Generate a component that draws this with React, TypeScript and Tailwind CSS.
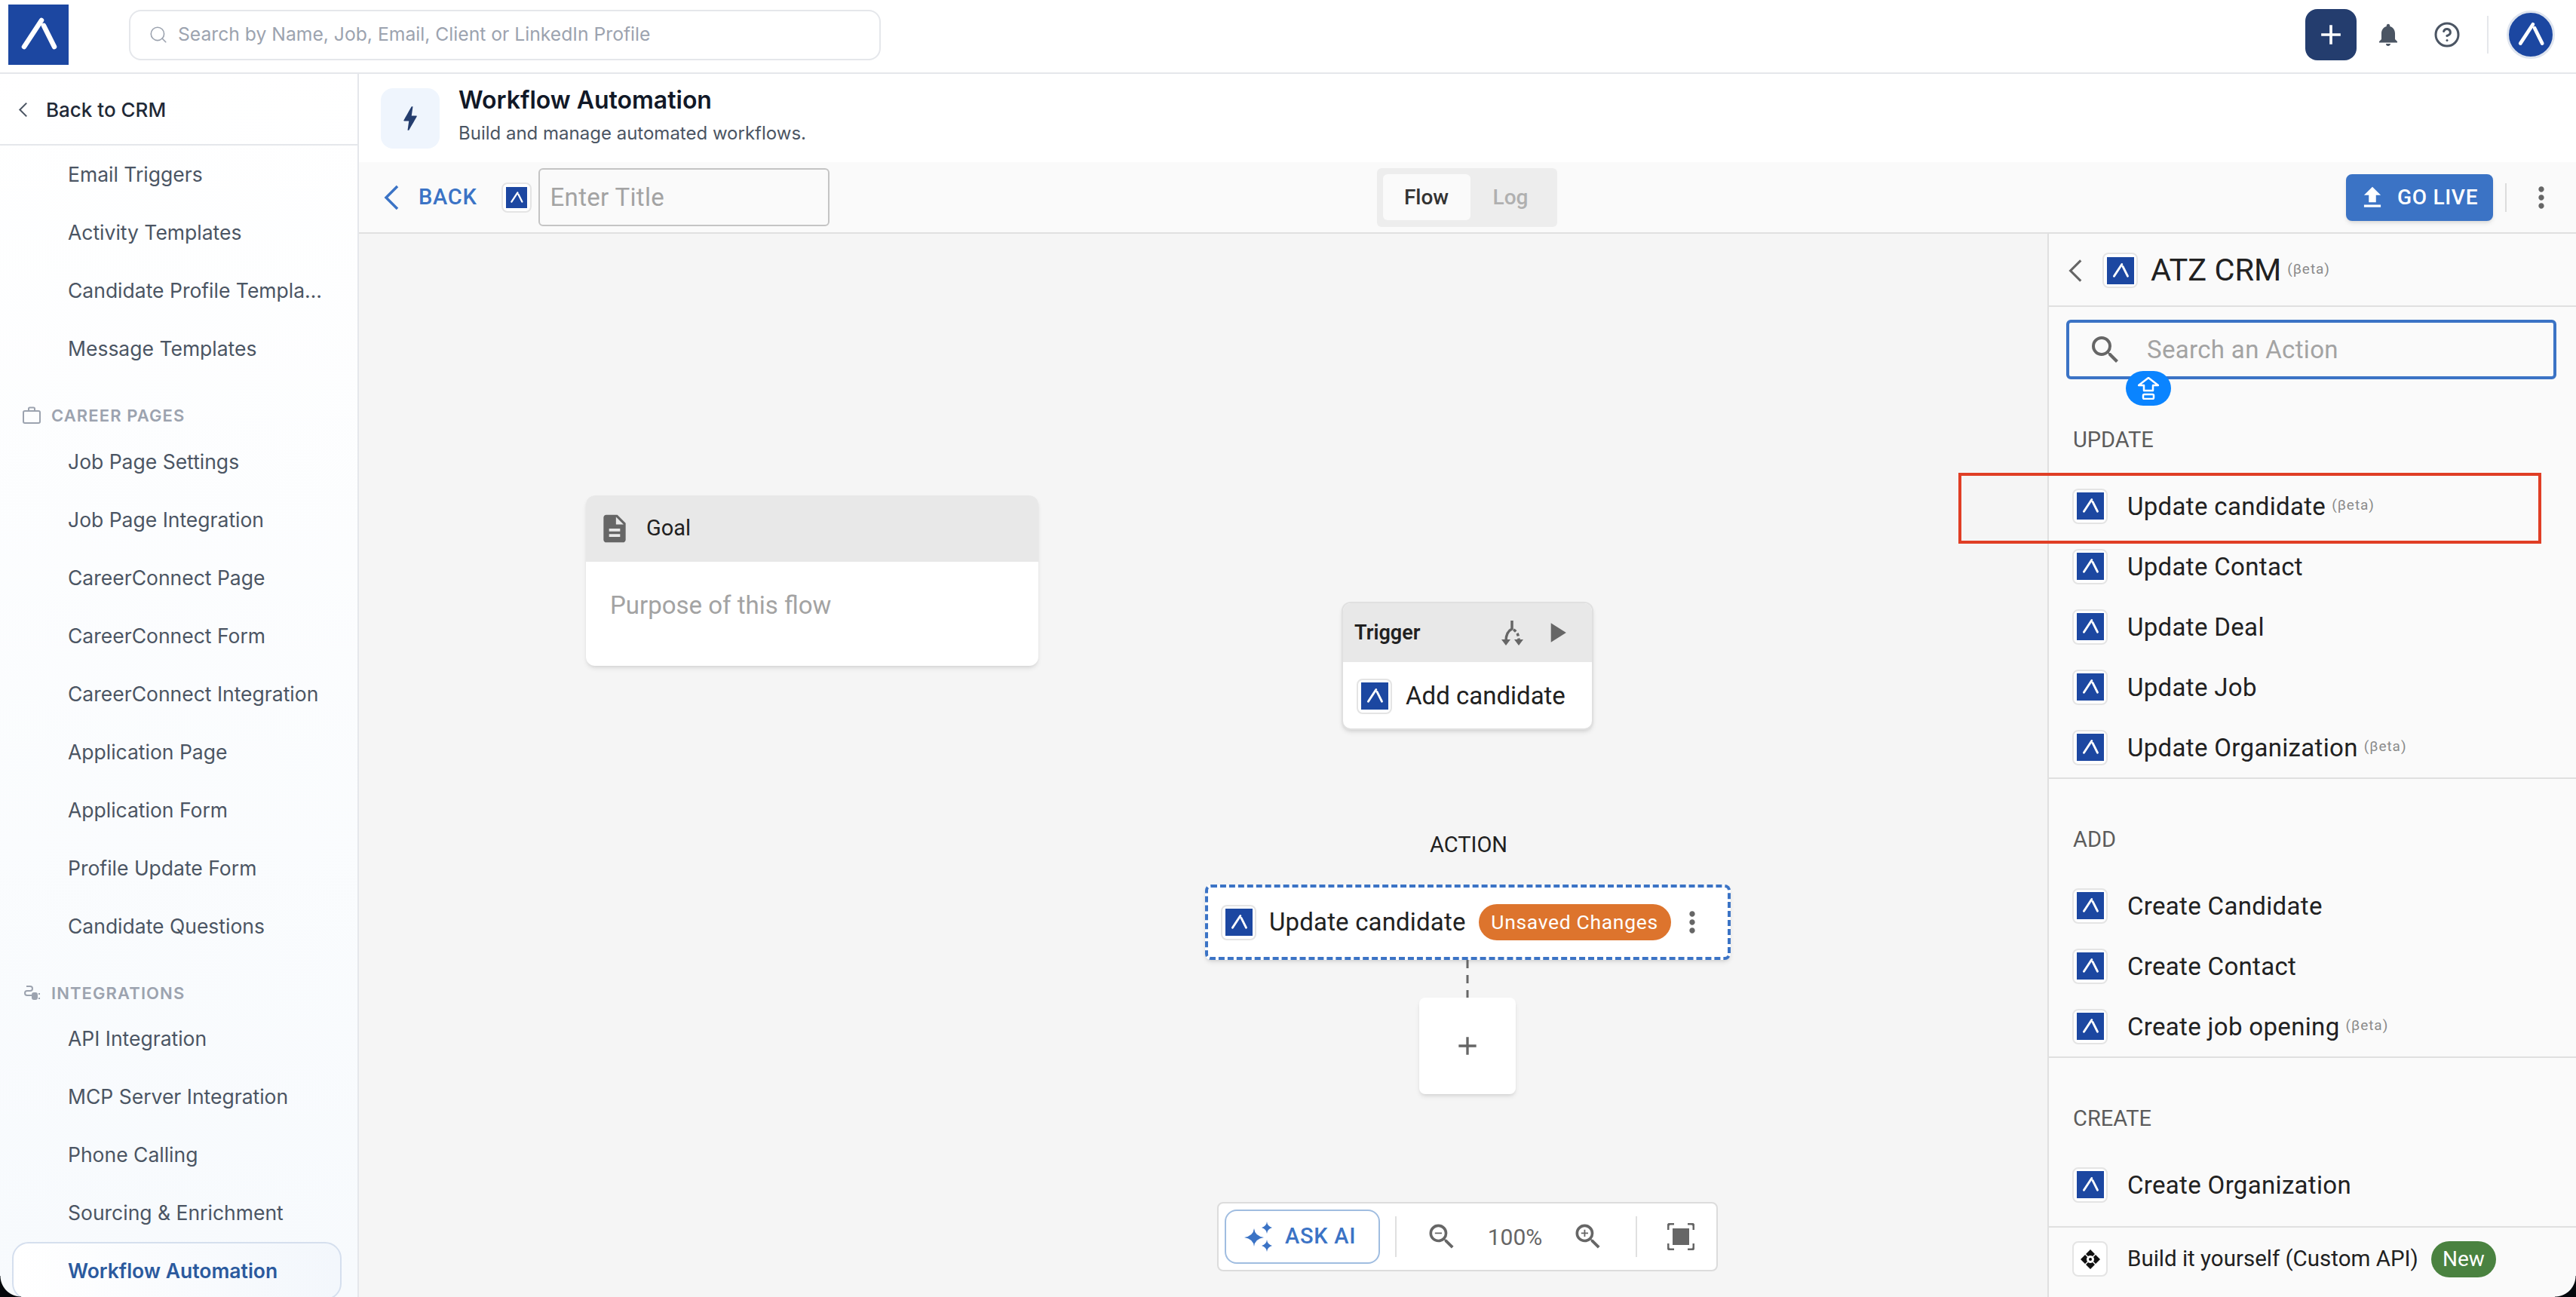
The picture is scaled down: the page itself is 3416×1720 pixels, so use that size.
import { ReactNode } from "react";
import { CircleHelp, Search } from "lucide-react";
import {
  MdAdd,
  MdBolt,
  MdDescription,
  MdFileUpload,
  MdMoreVert,
  MdNotifications,
  MdPlayArrow,
  MdSearch,
  MdZoomIn,
  MdZoomOut,
} from "react-icons/md";

const Strokes = () => (
  <path d="M44 21 L21 56 M47 28 L61 56" fill="none" stroke="#fff" strokeWidth="6.5" strokeLinecap="round" />
);

const Glyph = ({ className }: { className: string }) => (
  <svg viewBox="0 0 80 80" className={className}>
    <rect width="80" height="80" fill="#1c47a1" />
    <Strokes />
  </svg>
);

const Tile = ({ children }: { children?: ReactNode }) => (
  <div className="w-[47px] h-[47px] shrink-0 flex items-center justify-center rounded-lg border-2 border-[#e4e4e4] bg-white">
    {children ?? <Glyph className="w-9 h-9" />}
  </div>
);

const Chevron = ({ color, className }: { color: string; className: string }) => (
  <svg viewBox="0 0 22 34" className={className}>
    <polyline points="19,2 4,17 19,32" fill="none" stroke={color} strokeWidth="3.5" />
  </svg>
);

const Beta = () => (
  <span className="ml-2 mb-1 text-[19px] leading-none tracking-wider text-[#8a8a8a]">(βeta)</span>
);

const SideItem = ({ label }: { label: string }) => (
  <div className="h-[77px] shrink-0 flex items-center pl-[90px] text-[26.5px] text-[#4b5563]">
    <span className="truncate w-[338px]">{label}</span>
  </div>
);

const SideHeading = ({ icon, label, className }: { icon: ReactNode; label: string; className: string }) => (
  <div className={`shrink-0 pt-[37px] pl-[30px] flex items-start gap-[14px] text-[22px] leading-[26px] font-semibold tracking-[0.05em] text-[#9ca3af] ${className}`}>
    <div className="w-6 h-[26px] flex items-center">{icon}</div>
    {label}
  </div>
);

const PanelRow = ({ label, beta }: { label: string; beta?: boolean }) => (
  <div className="h-[80px] flex items-center pl-[31px] gap-[26px]">
    <Tile />
    <div className="flex items-center pt-[1px] text-[33px] tracking-[0.01em] text-[#212121]">
      {label}
      {beta && <Beta />}
    </div>
  </div>
);

const PanelLabel = ({ label }: { label: string }) => (
  <div className="h-[128px] pt-[65px] pl-8 text-[29px] leading-[30px] text-[#5c5c5c]">{label}</div>
);

const Spark = ({ d }: { d: string }) => <path d={d} fill="#3b73c5" />;

const careerPages = [
  "Job Page Settings",
  "Job Page Integration",
  "CareerConnect Page",
  "CareerConnect Form",
  "CareerConnect Integration",
  "Application Page",
  "Application Form",
  "Profile Update Form",
  "Candidate Questions",
];

const integrations = ["API Integration", "MCP Server Integration", "Phone Calling", "Sourcing & Enrichment"];

export default function App() {
  return (
    <div className="relative w-[3416px] h-[1720px] overflow-hidden bg-white font-['Inter',sans-serif]">
      {/* ----- Top bar ----- */}
      <header className="h-[98px] flex items-center border-b-2 border-[#e5e7eb] pb-1">
        <Glyph className="ml-[11px] w-20 h-20" />
        <div className="ml-20 w-[997px] h-[67px] flex items-center rounded-2xl border-2 border-[#e5e7eb] pl-6 gap-[13px] text-[24.7px] text-[#9ca3af]">
          <Search size={26} strokeWidth={1.5} />
          Search by Name, Job, Email, Client or LinkedIn Profile
        </div>
        <div className="ml-auto flex items-center pr-[28px]">
          <div className="w-[68px] h-[68px] rounded-2xl bg-[#243d6e] flex items-center justify-center text-white">
            <MdAdd size={44} />
          </div>
          <MdNotifications size={36} className="ml-6 text-[#4b5563]" />
          <CircleHelp size={36} strokeWidth={2} className="ml-[42px] text-[#4b5563]" />
          <div className="ml-[35px] w-[2px] h-[50px] bg-[#e5e7eb]" />
          <div className="ml-6 w-[64px] h-[64px] rounded-full border-[3px] border-[#dfe5ef] bg-[#1c47a1] flex items-center justify-center">
            <svg viewBox="0 0 80 80" className="w-[58px] h-[58px]">
              <Strokes />
            </svg>
          </div>
        </div>
      </header>

      <div className="flex h-[1622px]">
        {/* ----- Sidebar ----- */}
        <aside className="w-[476px] shrink-0 border-r-2 border-[#e5e7eb] overflow-hidden bg-gradient-to-b from-white to-[#f7fafd]">
          <div className="h-[95px] flex items-center border-b-2 border-[#e5e7eb] pl-6 pt-[1px] gap-[24px] text-[26px] font-medium text-[#1f2937]">
            <Chevron color="#4b5563" className="w-[13px] h-[27px]" />
            Back to CRM
          </div>
          <SideItem label="Email Triggers" />
          <SideItem label="Activity Templates" />
          <SideItem label="Candidate Profile Templates" />
          <SideItem label="Message Templates" />
          <SideHeading
            className="h-[73px]"
            label="CAREER PAGES"
            icon={
              <svg viewBox="0 0 24 24" className="w-6 h-6" fill="none" stroke="#9ca3af" strokeWidth="2">
                <rect x="1" y="6" width="22" height="16" rx="2" />
                <path d="M8 6V3q0-1.500 1.500-1.500h5Q16 1.500 16 3v3" />
              </svg>
            }
          />
          {careerPages.map((label) => (
            <SideItem key={label} label={label} />
          ))}
          <SideHeading
            className="h-[72px]"
            label="INTEGRATIONS"
            icon={
              <svg viewBox="0 0 24 24" className="w-6 h-6" fill="none" stroke="#9ca3af" strokeWidth="2">
                <path d="M5 3h5q3 0 3 3t-3 3H6q-3 0-3 3t3 3h6" />
                <rect x="13" y="12" width="6" height="8" rx="2" fill="#9ca3af" />
                <path d="M21 13h2M21 19h2" />
              </svg>
            }
          />
          {integrations.map((label) => (
            <SideItem key={label} label={label} />
          ))}
          <div className="h-[77px] ml-[16px] w-[437px] pl-[72px] flex items-center rounded-[22px] border-2 border-[#d5dfee] bg-gradient-to-r from-white to-[#f3f7fc] text-[26.5px] font-semibold text-[#2b5a9e]">
            Workflow Automation
          </div>
        </aside>

        <main className="flex-1 flex flex-col min-w-0">
          {/* ----- Page title ----- */}
          <div className="h-[117px] shrink-0 flex items-start pt-[19px] pl-[29px] gap-[25px]">
            <div className="w-[78px] h-20 rounded-2xl bg-[#eff5fd] flex items-center justify-center text-[#243d6e]">
              <MdBolt size={42} />
            </div>
            <div className="-mt-[2px]">
              <div className="text-[32px] leading-[36px] font-semibold text-[#111827]">Workflow Automation</div>
              <div className="mt-[10px] text-[24px] leading-[32px] text-[#4b5563]">Build and manage automated workflows.</div>
            </div>
          </div>

          {/* ----- Flow toolbar ----- */}
          <div className="h-[95px] shrink-0 flex items-center bg-[#fafafa] border-b-2 border-[#e0e0e0] font-['Roboto',sans-serif]">
            <Chevron color="#3b73c5" className="ml-[32px] w-[22px] h-[34px]" />
            <span className="ml-[25px] pt-[1px] text-[29px] font-medium tracking-wide text-[#3b73c5]">BACK</span>
            <div className="ml-[32px] w-[40px] h-[40px] rounded-lg border-2 border-[#e4e4e4] bg-white flex items-center justify-center">
              <Glyph className="w-7 h-7" />
            </div>
            <div className="ml-[9px] w-[386px] h-[77px] flex items-center pl-[14px] pt-[1px] rounded-md border-2 border-[#c4c4c4] text-[33px] tracking-[0.01em] text-[#a3a3a3]">
              Enter Title
            </div>
            <div className="ml-[726px] w-[239px] h-[78px] flex items-center p-2 rounded-md bg-[#ededed] text-[28px] font-medium">
              <div className="w-[116px] h-[61px] flex items-center justify-center rounded-md bg-[#fafafa] text-[#333]">Flow</div>
              <div className="flex-1 text-center text-[#b0b0b0]">Log</div>
            </div>
            <div className="ml-auto flex items-center pr-[24px]">
              <div className="w-[195px] h-[62px] flex items-center pl-[16px] gap-[14px] rounded-lg bg-[#3b73c5] text-white text-[28px] font-medium tracking-wide shadow-md">
                <MdFileUpload size={38} />
                GO LIVE
              </div>
              <div className="ml-4 w-[2px] h-[38px] bg-[#dcdcdc]" />
              <MdMoreVert size={44} className="ml-[24px] text-[#666]" />
            </div>
          </div>

          <div className="flex-1 flex min-h-0 font-['Roboto',sans-serif]">
            {/* ----- Canvas ----- */}
            <div className="relative flex-1 bg-[#f5f5f5] text-[#212121]">
              <div className="absolute left-[301px] top-[347px] w-[600px] h-[226px] rounded-xl bg-white shadow-md overflow-hidden">
                <div className="h-[88px] bg-[#e8e8e8] flex items-center pl-[16px] gap-[20px] text-[29px]">
                  <MdDescription size={44} className="text-[#666]" />
                  Goal
                </div>
                <div className="pt-[42px] pl-[32px] text-[33px] leading-[32px] text-[#a3a3a3]">Purpose of this flow</div>
              </div>

              <div className="absolute left-[1303px] top-[488px] w-[334px] h-[170px] rounded-xl border-2 border-[#e0e0e0] bg-white shadow-md overflow-hidden">
                <div className="h-[78px] bg-[#e8e8e8] flex items-center pl-[15px] text-[27px] font-semibold">
                  Trigger
                  <svg viewBox="0 0 29 33" className="ml-[108px] w-[29px] h-[33px]" fill="none" stroke="#666" strokeWidth="3.5">
                    <path d="M14 0v11q-8 4-8 16" />
                    <path d="M16 12q7 4 7 14" strokeDasharray="4 3" />
                    <path d="M0 25h12l-6 8zM17 25h12l-6 8z" fill="#666" stroke="none" />
                  </svg>
                  <MdPlayArrow size={44} className="ml-[22px] text-[#666]" />
                </div>
                <div className="h-[90px] flex items-center pl-[18px] gap-[18px] text-[33px]">
                  <Tile />
                  Add candidate
                </div>
              </div>

              <div className="absolute left-[1420px] w-[100px] top-[793px] text-center text-[29px] leading-[34px]">ACTION</div>

              <div className="absolute left-[1122px] top-[863px] w-[697px] h-[100px] flex items-center pl-[17px] rounded-lg border-[4px] border-dashed border-[#3b73c5] bg-white shadow-md">
                <Tile />
                <span className="ml-[17px] text-[33px] tracking-[0.005em]">Update candidate</span>
                <span className="ml-[17px] w-[255px] h-[48px] flex items-center justify-center rounded-full bg-[#dd742d] text-white text-[26.5px] tracking-wide">
                  Unsaved Changes
                </span>
                <MdMoreVert size={44} className="ml-[6px] text-[#666]" />
              </div>

              <svg viewBox="0 0 4 50" className="absolute left-[1468px] top-[963px] w-1 h-[50px]">
                <line x1="2" y1="0" x2="2" y2="50" stroke="#666" strokeWidth="3" strokeDasharray="11 9" />
              </svg>

              <div className="absolute left-[1406px] top-[1013px] w-[128px] h-[128px] flex items-center justify-center rounded-lg bg-white shadow-md text-[#666]">
                <MdAdd size={40} />
              </div>

              <div className="absolute left-[1138px] top-[1284px] w-[664px] h-[92px] flex items-center rounded-lg border-2 border-[#dcdcdc] bg-white pl-[8px] text-[#666]">
                <div className="w-[206px] h-[72px] flex items-center pl-[24px] gap-[16px] rounded-2xl border-2 border-[#a0bde0] text-[29px] font-medium tracking-wide text-[#3b73c5]">
                  <svg viewBox="0 0 38 40" className="w-[38px] h-[40px]">
                    <Spark d="M13 9 Q14 19 26 21 Q14 23 13 33 Q12 23 0 21 Q12 19 13 9Z" />
                    <Spark d="M30 0 Q30.500 6 37 8 Q30.500 10 30 16 Q29.500 10 23 8 Q29.500 6 30 0Z" />
                    <Spark d="M30 24 Q30.500 30 37 32 Q30.500 34 30 40 Q29.500 34 23 32 Q29.500 30 30 24Z" />
                  </svg>
                  ASK AI
                </div>
                <div className="ml-[20px] w-[2px] h-[54px] bg-[#e0e0e0]" />
                <MdZoomOut size={44} className="ml-[38px]" />
                <span className="w-[150px] text-center text-[30px]">100%</span>
                <MdZoomIn size={44} />
                <div className="ml-[41px] w-[2px] h-[54px] bg-[#e0e0e0]" />
                <svg viewBox="0 0 36 36" className="ml-[40px] w-9 h-9" fill="none" stroke="#666" strokeWidth="3">
                  <path d="M1 9V4q0-3 3-3h5M27 1h5q3 0 3 3v5M35 27v5q0 3-3 3h-5M9 35H4q-3 0-3-3v-5" />
                  <rect x="7" y="7" width="22" height="22" fill="#666" stroke="none" />
                </svg>
              </div>
            </div>

            {/* ----- Action picker ----- */}
            <aside className="w-[701px] shrink-0 border-l-2 border-[#e0e0e0] bg-[#fafafa] flex flex-col">
              <div className="h-[97px] shrink-0 flex items-center border-b-2 border-[#e0e0e0] pl-[25px] pt-[2px]">
                <Chevron color="#666" className="w-[20px] h-[32px]" />
                <div className="ml-[26px]">
                  <Tile />
                </div>
                <span className="ml-[17px] text-[41.5px] text-[#212121]">ATZ CRM</span>
                <Beta />
              </div>
              <div className="relative shrink-0 mt-[17px] ml-[23px] w-[650px] h-[79px] flex items-center pl-[24px] gap-[31px] rounded-md border-[4px] border-[#3b73c5] text-[33px] tracking-[0.01em] text-[#a3a3a3]">
                <MdSearch size={48} className="text-[#666]" />
                Search an Action
                <div className="absolute left-[75px] top-[64px] w-[60px] h-[46px] flex items-center justify-center rounded-[23px] bg-[#0a84ff]">
                  <svg viewBox="0 0 28 30" className="w-[28px] h-[30px]" fill="none" stroke="#fff" strokeWidth="2.5">
                    <path d="M14 1 L27 11 H20 V18 H8 V11 H1Z" strokeLinejoin="round" />
                    <rect x="7" y="23" width="14" height="6" rx="1.500" />
                  </svg>
                </div>
              </div>
              <PanelLabel label="UPDATE" />
              <PanelRow label="Update candidate" beta />
              <PanelRow label="Update Contact" />
              <PanelRow label="Update Deal" />
              <PanelRow label="Update Job" />
              <PanelRow label="Update Organization" beta />
              <div className="h-[2px] shrink-0 bg-[#e0e0e0]" />
              <PanelLabel label="ADD" />
              <PanelRow label="Create Candidate" />
              <PanelRow label="Create Contact" />
              <PanelRow label="Create job opening" beta />
              <div className="h-[2px] shrink-0 bg-[#e0e0e0]" />
              <PanelLabel label="CREATE" />
              <PanelRow label="Create Organization" />
              <div className="mt-[15px] h-[85px] shrink-0 flex items-center border-t-2 border-[#e0e0e0] pl-[31px] gap-[26px] text-[29.5px] text-[#212121]">
                <Tile>
                  <svg viewBox="0 0 26 26" className="w-[26px] h-[26px]" fill="#111">
                    <path d="M13 0 L19 6 L16 9 Q13 7 10 9 L7 6Z M26 13 L20 19 L17 16 Q19 13 17 10 L20 7Z M13 26 L7 20 L10 17 Q13 19 16 17 L19 20Z M0 13 L6 7 L9 10 Q7 13 9 16 L6 19Z" />
                    <circle cx="13" cy="13" r="2" />
                  </svg>
                </Tile>
                Build it yourself (Custom API)
                <span className="-ml-[9px] w-[86px] h-12 flex items-center justify-center rounded-full bg-[#4a8240] text-white text-[28px]">
                  New
                </span>
              </div>
            </aside>
          </div>
        </main>
      </div>

      {/* red annotation box */}
      <div className="absolute left-[2597px] top-[627px] w-[773px] h-[94px] border-[4px] border-[#e03e25]" />

      {/* rounded screen corners */}
      <div className="absolute left-0 bottom-0 w-7 h-7 bg-[radial-gradient(circle_at_100%_0%,transparent_27px,#05080c_28px)]" />
      <div className="absolute right-0 bottom-0 w-7 h-7 bg-[radial-gradient(circle_at_0%_0%,transparent_27px,#05080c_28px)]" />
    </div>
  );
}
